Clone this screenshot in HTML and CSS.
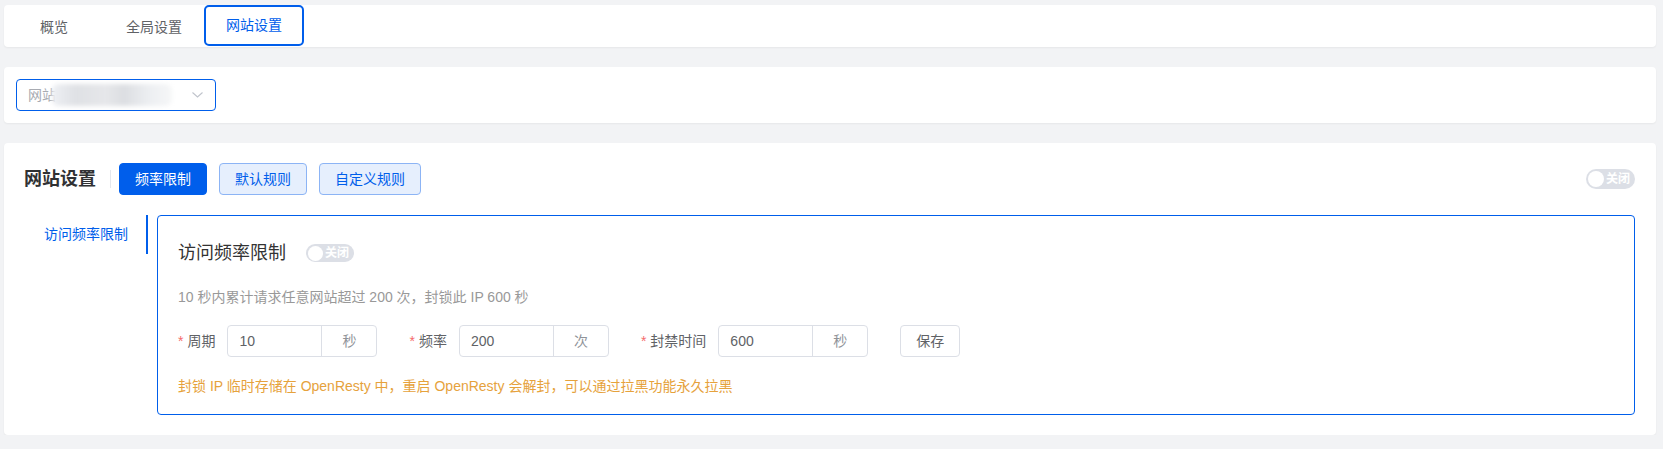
FILE: index.html
```html
<!DOCTYPE html>
<html lang="zh-CN">
<head>
<meta charset="utf-8">
<title>网站设置</title>
<link rel="stylesheet" href="styles.css">
</head>
<body>
<div class="page">
  <div class="card tabs-card">
    <div class="route-tab">概览</div>
    <div class="route-tab">全局设置</div>
    <div class="route-tab active">网站设置</div>
  </div>

  <div class="card select-card">
    <div class="select">
      <span class="placeholder">网站</span>
      <span class="masked"></span>
      <svg class="chevron" width="11" height="6" viewBox="0 0 11 6"><polyline points="0.5,0.5 5.5,5 10.5,0.5" fill="none" stroke="#c0c4cc" stroke-width="1.1"/></svg>
    </div>
  </div>

  <div class="card main-card">
    <div class="main-header">
      <span class="main-title">网站设置</span>
      <span class="divider"></span>
      <button class="btn btn-primary">频率限制</button>
      <button class="btn btn-plain">默认规则</button>
      <button class="btn btn-plain">自定义规则</button>
      <span class="switch header-switch"><span class="knob"></span><span class="switch-text">关闭</span></span>
    </div>
    <div class="main-body">
      <div class="side-nav">
        <div class="side-item active">访问频率限制</div>
      </div>
      <div class="panel">
        <div class="panel-title-row">
          <span class="panel-title">访问频率限制</span>
          <span class="switch panel-switch"><span class="knob"></span><span class="switch-text">关闭</span></span>
        </div>
        <div class="panel-desc">10 秒内累计请求任意网站超过 200 次，封锁此 IP 600 秒</div>
        <div class="form-row">
          <div class="form-item">
            <label class="form-label"><span class="req">*</span>周期</label>
            <div class="input-group"><span class="input-value">10</span><span class="input-append">秒</span></div>
          </div>
          <div class="form-item">
            <label class="form-label"><span class="req">*</span>频率</label>
            <div class="input-group"><span class="input-value">200</span><span class="input-append">次</span></div>
          </div>
          <div class="form-item">
            <label class="form-label"><span class="req">*</span>封禁时间</label>
            <div class="input-group"><span class="input-value">600</span><span class="input-append">秒</span></div>
          </div>
          <button class="btn btn-default">保存</button>
        </div>
        <div class="panel-warn">封锁 IP 临时存储在 OpenResty 中，重启 OpenResty 会解封，可以通过拉黑功能永久拉黑</div>
      </div>
    </div>
  </div>
</div>
</body>
</html>
```

FILE: styles.css
```css
* { box-sizing: border-box; }
html, body { margin: 0; padding: 0; }
body {
  background: #f2f3f5;
  font-family: "Liberation Sans", "Noto Sans CJK SC", sans-serif;
  font-size: 14px;
  color: #606266;
}
.page {
  padding: 5px 7px 0 4px;
  display: flex;
  flex-direction: column;
  gap: 20px;
}
.card {
  background: #fff;
  border-radius: 4px;
  box-shadow: 0 1px 2px rgba(0, 0, 0, 0.05);
}
.tabs-card {
  display: flex;
  height: 42px;
}
.route-tab {
  width: 100px;
  height: 42px;
  line-height: 40px;
  text-align: center;
  color: #606266;
  font-size: 14px;
  border: 2px solid transparent;
  border-radius: 5px;
}
.route-tab.active {
  color: #005eeb;
  border-color: #005eeb;
  height: 41px;
  line-height: 37px;
}
.select-card {
  height: 56px;
  padding: 12px;
}
.select {
  width: 200px;
  height: 32px;
  border: 1px solid #005eeb;
  border-radius: 4px;
  display: flex;
  align-items: center;
  padding: 0 12px 0 11px;
}
.placeholder {
  color: #a8abb2;
  font-size: 14px;
  line-height: 30px;
}
.masked {
  display: inline-block;
  width: 120px;
  height: 22px;
  margin-left: -4px;
  background: linear-gradient(90deg, #eef0f4 0%, #dfe1e5 20%, #e6e7ea 45%, #dcdee2 60%, #eceef1 80%, #f6f7f8 100%);
  filter: blur(2px);
  border-radius: 6px;
}
.chevron {
  margin-left: auto;
}
.main-card {
  padding: 20px 21px 20px 20px;
}
.main-header {
  display: flex;
  align-items: center;
  height: 32px;
}
.main-title {
  font-size: 18px;
  font-weight: bold;
  color: #303133;
  line-height: 32px;
}
.divider {
  width: 1px;
  height: 18px;
  background: #e4e7ed;
  margin: 0 8px 0 14px;
}
.btn {
  font-family: inherit;
  font-size: 14px;
  height: 32px;
  padding: 0 15px;
  border-radius: 4px;
  border: 1px solid #dcdfe6;
  background: #fff;
  color: #606266;
  line-height: 30px;
  cursor: pointer;
}
.main-header .btn + .btn { margin-left: 12px; }
.btn-primary {
  background: #005eeb;
  border-color: #005eeb;
  color: #fff;
}
.btn-plain {
  background: #e6effd;
  border-color: #8cb4f5;
  color: #005eeb;
}
.switch {
  display: inline-flex;
  align-items: center;
  background: #dcdfe6;
  border-radius: 10px;
  padding: 0 5px 0 2px;
}
.switch .knob {
  background: #fff;
  border-radius: 50%;
}
.switch-text {
  color: #fff;
  font-size: 12px;
  font-weight: bold;
  margin-left: 2px;
  line-height: 1;
}
.header-switch {
  margin-left: auto;
  height: 20px;
}
.header-switch .knob { width: 16px; height: 16px; }
.panel-switch {
  height: 18px;
  margin-left: 20px;
  border-radius: 9px;
}
.panel-switch .knob { width: 15px; height: 15px; }
.main-body {
  display: flex;
  margin-top: 20px;
}
.side-nav {
  width: 124px;
  flex: none;
}
.side-item {
  height: 39px;
  line-height: 39px;
  padding: 0 18px 0 20px;
  color: #005eeb;
  font-size: 14px;
  border-right: 2px solid #005eeb;
  text-align: right;
}
.panel {
  flex: 1;
  margin-left: 9px;
  border: 1px solid #005eeb;
  border-radius: 4px;
  padding: 20px 20px 17px 20px;
}
.panel-title-row {
  display: flex;
  align-items: center;
  height: 34px;
}
.panel-title {
  font-size: 18px;
  color: #333;
  line-height: 34px;
}
.panel-desc {
  margin-top: 16px;
  line-height: 22px;
  font-size: 14px;
  color: #999;
}
.form-row {
  display: flex;
  align-items: center;
  margin-top: 17px;
  height: 32px;
}
.form-item {
  display: flex;
  align-items: center;
  margin-right: 32px;
}
.form-label {
  padding-right: 12px;
  color: #606266;
  font-size: 14px;
  line-height: 32px;
}
.req {
  color: #f56c6c;
  margin-right: 4px;
}
.input-group {
  width: 150px;
  height: 32px;
  border: 1px solid #dcdfe6;
  border-radius: 4px;
  display: flex;
}
.input-value {
  flex: 1;
  padding-left: 11px;
  line-height: 30px;
  color: #606266;
}
.input-append {
  width: 55px;
  border-left: 1px solid #dcdfe6;
  text-align: center;
  line-height: 30px;
  color: #909399;
}
.btn-default {
  padding: 0 15px;
}
.panel-warn {
  margin-top: 18px;
  line-height: 22px;
  font-size: 14px;
  color: #e6a23c;
}
```
